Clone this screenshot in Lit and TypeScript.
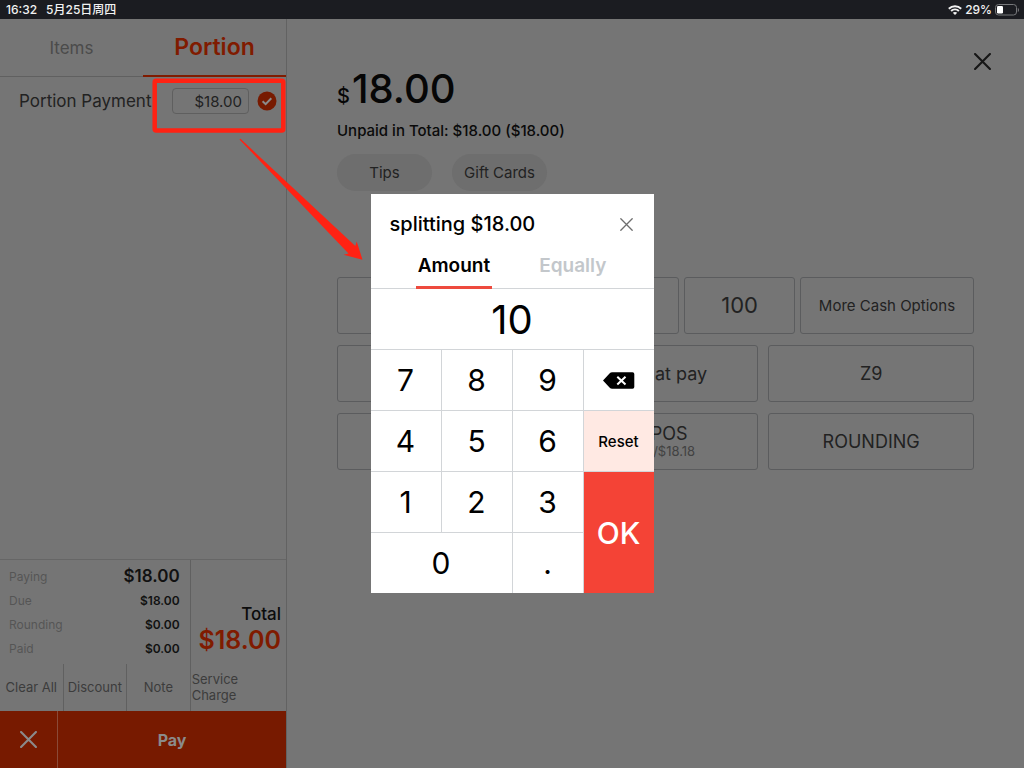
import { LitElement, html, css, svg } from "lit";
import { customElement, state } from "lit/decorators.js";

const cross = (size: number, width: number) => svg`
  <svg width=${size} height=${size} viewBox="0 0 16 16" fill="none" stroke="currentColor"
    stroke-width=${width} stroke-linecap="round" aria-hidden="true">
    <path d="M1 1 15 15M15 1 1 15" />
  </svg>`;

const base = css`
  * { box-sizing: border-box; }
  button, input {
    font: inherit;
    color: inherit;
    background: none;
    border: 0;
    border-radius: 0;
    margin: 0;
    padding: 0;
  }
  button { cursor: pointer; }
  svg { display: block; }
`;

@customElement("status-bar")
export class StatusBar extends LitElement {
  static styles = [base, css`
    :host {
      display: flex;
      align-items: center;
      justify-content: space-between;
      height: 19px;
      padding: 0 5px 0 6px;
      background: #1b1c21;
      color: #f2f2f2;
      font-size: 12px;
      font-weight: 500;
      line-height: 18px;
    }
    .group { display: flex; align-items: center; gap: 9px; }
    .system { gap: 3px; }
  `];

  render() {
    return html`
      <div class="group"><span>16:32</span><span>5月25日周四</span></div>
      <div class="group system">
        <svg width="14" height="10" viewBox="0 0 14 10" fill="none" stroke="currentColor" stroke-width="2" aria-hidden="true">
          <path d="M.8 3.700C4.300.4 9.700.4 13.200 3.700M3.100 6.100c2.200-2 5.600-2 7.800 0" />
          <path d="M7 10 4.800 7.800c1.200-1.100 3.200-1.100 4.400 0z" fill="currentColor" stroke="none" />
        </svg>
        <span>29%</span>
        <svg width="24" height="12" viewBox="0 0 24 12" aria-hidden="true">
          <rect x=".5" y=".5" width="21" height="10.500" rx="3" fill="none" stroke="#77787b" />
          <rect x="2" y="2" width="6" height="7.500" rx="1.200" fill="#fff" />
          <path d="M22.800 4v4c1.500-.6 1.500-3.400 0-4z" fill="#77787b" />
        </svg>
      </div>`;
  }
}

@customElement("order-panel")
export class OrderPanel extends LitElement {
  static styles = [base, css`
    :host {
      display: flex;
      flex-direction: column;
      min-height: 0;
      border-right: 1px solid #626262;
    }
    .tabs {
      display: grid;
      grid-template-columns: 1fr 1fr;
      height: 58px;
      border-bottom: 1px solid #606060;
    }
    .tab { color: #4b4b4b; font-size: 17px; }
    .tab.on {
      margin-bottom: -1px;
      border-bottom: 2px solid #801b00;
      color: #801b00;
      font-size: 23px;
      font-weight: 600;
    }
    .portion {
      display: flex;
      align-items: center;
      height: 48px;
      padding: 0 9px 0 19px;
    }
    .portion label { flex: 1; color: #222; font-size: 17px; white-space: nowrap; }
    .portion input {
      width: 77px;
      height: 26px;
      margin-right: 8px;
      padding-right: 6px;
      border: 1px solid #5f5f5f;
      border-radius: 4px;
      color: #222;
      font-size: 15px;
      text-align: right;
    }
    .space { flex: 1; }
    .summary {
      display: grid;
      grid-template-columns: 2fr 1fr;
      border-top: 1px solid #666;
    }
    .amounts {
      margin: 0;
      padding: 4px 10px 4px 9px;
      border-right: 1px solid #606060;
    }
    .line {
      display: flex;
      align-items: center;
      justify-content: space-between;
      height: 24px;
      color: #111;
      font-size: 12px;
      font-weight: 600;
    }
    .line dt { color: #555; font-weight: 400; }
    .line dd { margin: 0; }
    .line.main dd { font-size: 17px; }
    .total {
      display: flex;
      flex-direction: column;
      justify-content: flex-end;
      padding: 0 5px 10px 0;
      text-align: right;
      color: #0c0c0c;
      font-size: 17px;
      font-weight: 500;
      line-height: 24px;
    }
    .total strong { color: #801b00; font-size: 25px; font-weight: 600; line-height: 28px; }
    .actions { display: grid; grid-template-columns: 2fr 2fr 2fr 3fr; height: 47px; }
    .actions button {
      border-right: 1px solid #606060;
      padding-bottom: 1px;
      color: #3c3c3c;
      font-size: 13px;
      line-height: 16px;
      white-space: nowrap;
    }
    .actions .last { border-right: 0; padding: 0 8px 1px 1px; text-align: left; white-space: normal; }
    .pay { display: grid; grid-template-columns: 1fr 4fr; height: 57px; background: #771a00; color: #8b8b8b; }
    .pay button { display: grid; place-items: center; font-size: 16px; font-weight: 700; }
    .pay button + button { border-left: 1px solid #8a4a38; }
  `];

  render() {
    const lines = [["Paying", "$18.00"], ["Due", "$18.00"], ["Rounding", "$0.00"], ["Paid", "$0.00"]];
    return html`
      <div class="tabs" role="tablist">
        <button class="tab" role="tab">Items</button>
        <button class="tab on" role="tab" aria-selected="true">Portion</button>
      </div>
      <div class="portion">
        <label for="portion">Portion Payment</label>
        <input id="portion" value="$18.00" />
        <svg width="20" height="20" viewBox="0 0 20 20" aria-hidden="true">
          <circle cx="10" cy="10" r="9.500" fill="#771a00" />
          <path d="m5.600 10.200 3 2.900 5.700-5.800" fill="none" stroke="#8b8b8b" stroke-width="2" />
        </svg>
      </div>
      <div class="space"></div>
      <div class="summary">
        <dl class="amounts">
          ${lines.map(([name, value], i) => html`
            <div class="line ${i === 0 ? "main" : ""}"><dt>${name}</dt><dd>${value}</dd></div>`)}
        </dl>
        <div class="total"><span>Total</span><strong>$18.00</strong></div>
      </div>
      <div class="actions">
        <button>Clear All</button>
        <button>Discount</button>
        <button>Note</button>
        <button class="last">Service Charge</button>
      </div>
      <div class="pay">
        <button aria-label="Cancel">${cross(17, 2)}</button>
        <button>Pay</button>
      </div>`;
  }
}

@customElement("payment-panel")
export class PaymentPanel extends LitElement {
  static styles = [base, css`
    :host { display: block; padding: 0 50px; color: #222; }
    .top { display: flex; justify-content: space-between; height: 97px; }
    .price {
      align-self: flex-end;
      margin: 0;
      color: #060606;
      font-size: 40px;
      font-weight: 500;
      line-height: 40px;
    }
    .price small { margin-right: 2px; font-size: 20px; }
    .close { display: grid; align-self: flex-start; width: 32px; height: 32px; margin: 26px -24px 0 0; place-items: center; color: #161616; }
    .unpaid { margin: 5px 0 14px; color: #0a0a0a; font-size: 15px; font-weight: 500; line-height: 19px; }
    .pills { display: flex; gap: 20px; margin-bottom: 86px; }
    .pills button {
      width: 95px;
      height: 37px;
      border-radius: 19px;
      background: #6e6e6e;
      font-size: 15px;
    }
    .row { display: grid; gap: 10px; margin-bottom: 11px; grid-template-columns: repeat(3, 1fr); }
    .row.cash { gap: 5px; grid-template-columns: repeat(4, 1fr) 174px; }
    .row button {
      height: 57px;
      border: 1px solid #5b5c5e;
      border-radius: 3px;
      font-size: 18px;
      line-height: 19px;
    }
    .row.cash button { font-size: 22px; }
    .row.cash .more { font-size: 15px; }
    .row small { display: block; color: #424242; font-size: 13px; line-height: 17px; }
  `];

  render() {
    return html`
      <div class="top">
        <h1 class="price"><small>$</small>18.00</h1>
        <button class="close" aria-label="Close">${cross(17, 2)}</button>
      </div>
      <p class="unpaid">Unpaid in Total: $18.00 ($18.00)</p>
      <div class="pills"><button>Tips</button><button>Gift Cards</button></div>
      <div class="row cash">
        <button>18</button><button>20</button><button>50</button><button>100</button>
        <button class="more">More Cash Options</button>
      </div>
      <div class="row"><button>Card</button><button>WeChat pay</button><button>Z9</button></div>
      <div class="row">
        <button>Alipay</button>
        <button>Z9 POS<small>$18.18/$18.18</small></button>
        <button>ROUNDING</button>
      </div>`;
  }
}

@customElement("split-dialog")
export class SplitDialog extends LitElement {
  static styles = [base, css`
    :host { display: block; width: 283px; background: #fff; color: #000; }
    .head { display: flex; align-items: center; justify-content: space-between; height: 60px; padding: 0 20px 0 19px; }
    h2 { margin: 0; font-size: 20px; font-weight: 500; }
    .close { color: #6e6e6e; padding: 1px; }
    .tabs { display: flex; justify-content: center; gap: 45px; height: 35px; border-bottom: 1px solid #d2d5d8; }
    .tab {
      height: 35px;
      padding: 0 2px 8px;
      border-bottom: 3px solid transparent;
      color: #c3c7cb;
      font-size: 19px;
      font-weight: 600;
      line-height: 22px;
    }
    .tab.on { border-color: #ee4a3e; color: #000; }
    .value {
      display: block;
      width: 100%;
      height: 60px;
      font-size: 40px;
      text-align: center;
    }
    .keys {
      display: grid;
      grid-template-columns: repeat(4, 1fr);
      grid-auto-rows: 60px;
      gap: 1px;
      padding-top: 1px;
      background: #d2d5d8;
    }
    .keys button { display: grid; place-items: center; background: #fff; font-size: 30px; }
    .keys .reset { background: #ffe9e3; font-size: 15px; font-weight: 500; }
    .keys .ok { grid-column: 4; grid-row: 3 / span 2; background: #f44336; color: #fff; font-weight: 500; }
    .keys .zero { grid-column: span 2; }
  `];

  @state() private value = "10";

  private press = (key: string) => {
    this.value += key;
  };

  private key(label: string, cls = "") {
    return html`<button class=${cls} @click=${() => this.press(label)}>${label}</button>`;
  }

  render() {
    return html`
      <div class="head">
        <h2>splitting $18.00</h2>
        <button class="close" aria-label="Close">${cross(13, 1.6)}</button>
      </div>
      <div class="tabs" role="tablist">
        <button class="tab on" role="tab" aria-selected="true">Amount</button>
        <button class="tab" role="tab">Equally</button>
      </div>
      <input class="value" aria-label="Amount" .value=${this.value} />
      <div class="keys">
        ${["7", "8", "9"].map((k) => this.key(k))}
        <button aria-label="Delete" @click=${() => (this.value = this.value.slice(0, -1))}>
          <svg width="32" height="17" viewBox="0 0 32 17" aria-hidden="true">
            <path d="M0 8.500 6.500 1.500Q7.600.3 9.300.3H29.500Q31.300.3 31.300 2.100V14.900Q31.300 16.700 29.500 16.700H9.300Q7.600 16.700 6.500 15.500Z" />
            <path d="m14.300 4.700 8.200 7.800M22.500 4.700l-8.200 7.800" stroke="#fff" stroke-width="2" />
          </svg>
        </button>
        ${["4", "5", "6"].map((k) => this.key(k))}
        <button class="reset" @click=${() => (this.value = "")}>Reset</button>
        ${["1", "2", "3"].map((k) => this.key(k))}
        <button class="ok">OK</button>
        ${this.key("0", "zero")}${this.key(".")}
      </div>`;
  }
}

@customElement("app-root")
export class AppRoot extends LitElement {
  static styles = [base, css`
    :host {
      position: relative;
      display: flex;
      flex-direction: column;
      height: 100vh;
      overflow: hidden;
      background: #757575;
      font-family: Inter, "Noto Sans CJK SC", sans-serif;
    }
    .screen { position: relative; flex: 1; display: grid; grid-template-columns: 287px 1fr; min-height: 0; }
    .layer { position: absolute; inset: 0; display: grid; place-items: center; }
    .marks { position: absolute; top: 0; left: 0; pointer-events: none; }
  `];

  render() {
    return html`
      <status-bar></status-bar>
      <div class="screen">
        <order-panel></order-panel>
        <payment-panel></payment-panel>
        <div class="layer"><split-dialog role="dialog" aria-label="splitting $18.00"></split-dialog></div>
      </div>
      <svg class="marks" width="380" height="270" viewBox="0 0 380 270" aria-hidden="true">
        <rect x="154.700" y="80.700" width="128.600" height="49.800" rx="1.500" fill="none" stroke="#ff2213" stroke-width="4.500" />
        <path d="M239.500 139.500 240.500 138.800 355.300 246 356.700 241.500 362.500 259.700 343.600 254.800 348.500 253.500Z" fill="#ff2213" />
      </svg>`;
  }
}
